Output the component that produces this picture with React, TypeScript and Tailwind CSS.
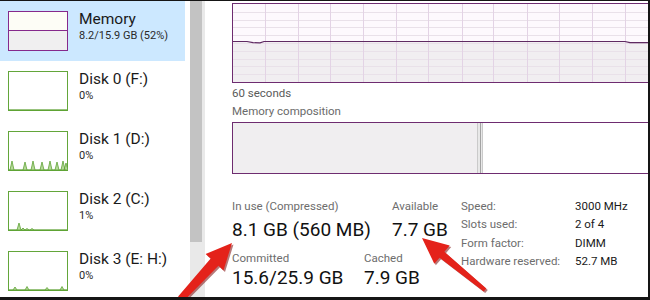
import React from "react";

function MemThumb() {
  return (
    <svg width="60" height="40" className="block">
      <rect x="0.5" y="0.5" width="59" height="39" fill="#fdfdf6" stroke="#85298c" />
      <rect x="1" y="20" width="58" height="19" fill="#f0eff0" />
      <line x1="1" x2="59" y1="19.5" y2="19.5" stroke="#85298c" />
    </svg>
  );
}

function DiskThumb({ spikes }: { spikes: [number, number][] }) {
  const base = 39;
  let d = `M1 ${base}`;
  spikes.forEach(([x, h]) => {
    d += ` L${x - 2} ${base} L${x} ${base - h} L${x + 2} ${base}`;
  });
  d += ` L59 ${base} Z`;
  return (
    <svg width="60" height="40" className="block">
      <rect x="0.5" y="0.5" width="59" height="39" fill="#ffffff" stroke="#63a63a" />
      <path d={d} fill="#b8da9c" stroke="#5da234" strokeWidth="0.8" />
    </svg>
  );
}

function SideItem({
  title,
  sub,
  selected,
  children,
}: {
  title: string;
  sub: string;
  selected?: boolean;
  children: React.ReactNode;
}) {
  return (
    <div className={selected ? "flex h-[60px] w-[185px] bg-[#cce8ff]" : "flex h-[60px] w-[185px]"}>
      <div className="ml-[8px] mt-[10px] shrink-0">{children}</div>
      <div className="ml-[11px] pt-[9px]">
        <div className="text-[15.5px] leading-[18px] text-[#1a1a1a]">{title}</div>
        <div className="mt-[1px] text-[11px] leading-[14px] text-[#2a2a2a]">{sub}</div>
      </div>
    </div>
  );
}

function MainChart() {
  const W = 440;
  const H = 78;
  const vx = [32, 65, 97, 130, 163, 195, 229, 260, 294, 326, 359, 392, 425];
  const hy = [8, 16, 23, 31, 39, 47, 55, 62, 70];
  const line = "M0 37.5 L14 37.5 L20 38.7 L27 38.8 L31 37.5 L392 37.5 L397 38.7 L440 38.7";
  return (
    <div className="mt-[2px] h-[80px] w-[442px] border border-[#6e2c70] bg-[#fdf9fd]">
      <svg width={W} height={H} className="block">
        <path d={line + " L440 78 L0 78 Z"} fill="#f1eef1" />
        {hy.map((y) => (
          <line key={y} x1="0" x2={W} y1={y + 0.5} y2={y + 0.5} stroke="#e9e1e9" />
        ))}
        {vx.map((x) => (
          <line key={x} x1={x + 0.5} x2={x + 0.5} y1="0" y2={H} stroke="#e3d3e5" />
        ))}
        <path d={line} fill="none" stroke="#5f2a62" strokeWidth="1.2" />
      </svg>
    </div>
  );
}

function Arrows() {
  const a1 = "232,243 223.5,270.5 218.5,265.8 183.3,301.4 178.1,296.6 210.7,258.6 205.6,254.1";
  const a2 = "422,238 434.3,263.8 439.6,257.8 483.7,291.5 486.3,288.5 444.4,251.8 449.7,245.4";
  return (
    <svg
      width="650"
      height="300"
      className="pointer-events-none absolute left-0 top-[-1px]"
    >
      <polygon points={a1} fill="#7c0b0b" opacity="0.55" transform="translate(1.5 1.5)" />
      <polygon points={a1} fill="#e4221a" />
      <polygon points={a2} fill="#7c0b0b" opacity="0.55" transform="translate(1.5 1.5)" />
      <polygon points={a2} fill="#e4221a" />
    </svg>
  );
}

export default function App() {
  return (
    <div className="relative h-[300px] w-[650px] overflow-hidden border-t border-r-2 border-b-[3px] border-[#151515] bg-white font-['Roboto',sans-serif]">
      <div className="flex h-full">
        {/* Sidebar */}
        <div className="w-[190px] shrink-0">
          <SideItem title="Memory" sub="8.2/15.9 GB (52%)" selected>
            <MemThumb />
          </SideItem>
          <SideItem title="Disk 0 (F:)" sub="0%">
            <DiskThumb spikes={[]} />
          </SideItem>
          <SideItem title="Disk 1 (D:)" sub="0%">
            <DiskThumb spikes={[[4, 9], [17, 8], [25, 9], [34, 8], [42, 9], [49, 8], [55, 9], [58, 7]]} />
          </SideItem>
          <SideItem title="Disk 2 (C:)" sub="1%">
            <DiskThumb spikes={[[11, 7], [15, 2], [19, 1.5], [24, 1.5]]} />
          </SideItem>
          <SideItem title="Disk 3 (E: H:)" sub="0%">
            <DiskThumb spikes={[[7, 3], [19, 3.5], [39, 2.5], [54, 3.5]]} />
          </SideItem>
        </div>

        {/* Scrollbar */}
        <div className="flex w-[15px] shrink-0 bg-[#e9e9e9]">
          <div className="h-[241px] w-[12px] bg-[#c3c3c3]" />
        </div>

        {/* Main */}
        <div className="flex-1 overflow-hidden pl-[27px]">
          <MainChart />
          <div className="mt-[3px] text-[11.5px] leading-[14px] text-[#5a5a5a]">60 seconds</div>
          <div className="mt-[4px] text-[11.5px] leading-[14px] text-[#6a6a6a]">Memory composition</div>
          <div className="mt-[4px] flex h-[52px] w-[480px] border border-[#6e2c70]">
            <div className="w-[244px] bg-[#f0eef0]" />
            <div className="flex w-[6px] justify-center border-x border-[#cacaca] bg-[#e8e8e8]">
              <div className="w-px bg-[#a3a3a3]" />
            </div>
            <div className="flex-1 bg-white" />
          </div>

          <div className="mt-[23px] flex items-start">
            <div className="w-[229px] shrink-0 pt-[2px]">
              <div className="flex">
                <div className="w-[160px]">
                  <div className="text-[11.5px] leading-[14px] text-[#6d6d6d]">In use (Compressed)</div>
                  <div className="mt-[5px] text-[19px] leading-[24px] text-[#111]">8.1 GB (560 MB)</div>
                </div>
                <div>
                  <div className="text-[11.5px] leading-[14px] text-[#6d6d6d]">Available</div>
                  <div className="mt-[5px] text-[19px] leading-[24px] text-[#111]">7.7 GB</div>
                </div>
              </div>
              <div className="mt-[9px] flex">
                <div className="w-[132px]">
                  <div className="text-[11.5px] leading-[14px] text-[#6d6d6d]">Committed</div>
                  <div className="mt-[1px] text-[19px] leading-[24px] text-[#111]">15.6/25.9 GB</div>
                </div>
                <div>
                  <div className="text-[11.5px] leading-[14px] text-[#6d6d6d]">Cached</div>
                  <div className="mt-[1px] text-[19px] leading-[24px] text-[#111]">7.9 GB</div>
                </div>
              </div>
            </div>
            <div className="grid grid-cols-[114px_auto] content-start text-[11.5px] leading-[18.4px]">
              <div className="text-[#6d6d6d]">Speed:</div>
              <div className="text-[#1a1a1a]">3000 MHz</div>
              <div className="text-[#6d6d6d]">Slots used:</div>
              <div className="text-[#1a1a1a]">2 of 4</div>
              <div className="text-[#6d6d6d]">Form factor:</div>
              <div className="text-[#1a1a1a]">DIMM</div>
              <div className="text-[#6d6d6d]">Hardware reserved:</div>
              <div className="text-[#1a1a1a]">52.7 MB</div>
            </div>
          </div>
        </div>
      </div>
      <Arrows />
    </div>
  );
}
